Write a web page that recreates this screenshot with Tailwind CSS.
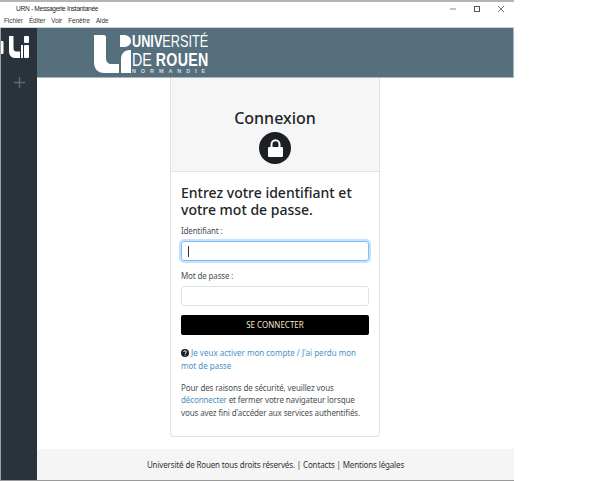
<!DOCTYPE html>
<html lang="fr">
<head>
<meta charset="utf-8">
<script src="https://cdn.jsdelivr.net/npm/@tailwindcss/browser@4"></script>
</head>
<body class="bg-white font-['Noto_Sans',sans-serif]">
<div class="w-[600px] h-[481px] overflow-hidden bg-white">
  <div class="w-[514px] h-[481px] flex flex-col border-t-2 border-b border-t-[#b4b4b4] border-b-[#9a9a9a] relative">
    <!-- title bar -->
    <div class="h-[14px] shrink-0 flex items-center pl-[16px] text-[6.600px] tracking-[-0.3px] leading-none text-[#222] font-['Liberation_Sans',sans-serif]">
      <span>URN - Messagerie Instantanée</span>
      <div class="ml-auto flex items-center">
        <svg class="w-[6px] h-[6px] mr-[18px]" viewBox="0 0 6 6"><path d="M0 3h6" stroke="#888" stroke-width="1"/></svg>
        <svg class="w-[6px] h-[6px] mr-[18px]" viewBox="0 0 6 6"><rect x=".5" y=".5" width="5" height="5" fill="none" stroke="#555" stroke-width="1"/></svg>
        <svg class="w-[6px] h-[6px] mr-[10px]" viewBox="0 0 6 6"><path d="M0 0l6 6M6 0L0 6" stroke="#777" stroke-width="1"/></svg>
      </div>
    </div>
    <!-- menu -->
    <div class="h-[12px] shrink-0 flex items-center gap-[6px] pl-[4px] text-[6.300px] leading-none text-[#333] font-['Liberation_Sans',sans-serif] border-b border-[#c8ced2]">
      <span>Fichier</span><span>Éditer</span><span>Voir</span><span>Fenêtre</span><span>Aide</span>
    </div>
    <div class="flex-1 min-h-0 flex">
      <!-- sidebar -->
      <aside class="w-[37px] shrink-0 bg-[#2a323c] border-l border-[#9aa0a6] flex flex-col pt-[8px] overflow-hidden">
        <svg class="w-[30px] h-[22px] shrink-0 -ml-px" viewBox="0 0 30 22" fill="#fff">
          <rect x="0" y="5" width="3.500" height="13" rx="1"/>
          <path d="M9 0h4.500v12c0 2.500 1 3.500 3 3.500H20V22h-5c-4 0-6-3-6-7z"/>
          <path d="M21 9h2v13h-2z"/>
          <rect x="24" y="0" width="5" height="7" rx="1"/>
          <rect x="24" y="9" width="5" height="13" rx="1"/>
        </svg>
        <svg class="w-[11px] h-[11px] shrink-0 mt-[19px] ml-[13px]" viewBox="0 0 11 11"><path d="M5.500 0v11M0 5.500h11" stroke="#5f6a74" stroke-width="1.300"/></svg>
      </aside>
      <div class="flex-1 min-w-0 flex flex-col">
        <!-- header -->
        <header class="h-[50px] shrink-0 bg-[#566f7d] border-r border-[#a9b5bc] border-b border-b-[#a9b5bc] flex items-start pl-[57px] pt-[7px]">
          <svg class="w-[37px] h-[38px] shrink-0" viewBox="0 0 37 38" fill="#fff">
            <path d="M0 0h10c1 0 2 1 2 2v21c0 4 2 6 6 6h7v9H10C4 38 0 34 0 27z"/>
            <path d="M26 0h4c4 0 7 2.500 7 6s-3 6-7 6h-4z"/>
            <path d="M37 15h-1c-6 0-9 4-9 9v14h10z"/>
          </svg>
          <div class="ml-px flex flex-col text-white font-['Liberation_Sans',sans-serif] w-[77px]">
            <div class="text-[16.500px] h-[12px] leading-[12px] whitespace-nowrap origin-left scale-x-[0.77]"><b>UNIV</b><span class="font-normal">ERSITÉ</span></div>
            <div class="text-[18px] h-[13px] leading-[13px] whitespace-nowrap mt-[7px] origin-left scale-x-[0.79]"><span class="font-normal">DE</span><b class="ml-[5px] tracking-[0.4px]">ROUEN</b></div>
            <div class="text-[5.500px] h-[5px] leading-[5px] whitespace-nowrap mt-[2px] tracking-[4.900px] font-bold text-[#d5dce0]">NORMANDIE</div>
          </div>
        </header>
        <!-- main -->
        <main class="flex-1 min-h-0 pl-[133px]">
          <div class="w-[210px] h-[359px] border border-t-0 border-[#e3e3e3] rounded-b-[4px] flex flex-col text-[#212529]">
            <div class="h-[94px] shrink-0 bg-[#f6f6f6] border-b border-[#e2e2e2] flex flex-col items-center pt-[30px]">
              <div class="text-[16px] leading-[20px] font-medium">Connexion</div>
              <div class="mt-[4px] w-[32px] h-[32px] rounded-full bg-[#1c1f23] flex items-center justify-center">
                <svg class="w-[15px] h-[18px]" viewBox="0 0 15 18"><path d="M3.500 9V5.500C3.500 3 5.200 1.200 7.500 1.200s4 1.800 4 4.300V9" fill="none" stroke="#fff" stroke-width="2"/><rect x="0" y="8" width="15" height="10" rx="1.200" fill="#fff"/></svg>
              </div>
            </div>
            <div class="flex-1 px-[10px] pt-[12px]">
              <h1 class="text-[14px] leading-[17px] font-medium text-[#212529]">Entrez votre identifiant et votre mot de passe.</h1>
              <label class="block text-[8px] tracking-[-0.15px] leading-[12px] text-[#4a4f54] mt-[7px]">Identifiant :</label>
              <div class="mt-[4px] h-[20px] rounded-[3px] border border-[#80bdff] shadow-[0_0_0_2px_rgba(0,123,255,0.22)] flex items-center pl-[6px]">
                <span class="w-px h-[11px] bg-[#333]"></span>
              </div>
              <label class="block text-[8px] tracking-[-0.15px] leading-[12px] text-[#4a4f54] mt-[9px]">Mot de passe :</label>
              <div class="mt-[4px] h-[20px] rounded-[3px] border border-[#dfe2e5]"></div>
              <button class="mt-[9px] w-full h-[20px] rounded-[2px] bg-black text-[#f4e4c8] text-[8px] leading-none flex items-center justify-center">SE CONNECTER</button>
              <div class="mt-[12px] text-[8px] leading-[12.500px]">
                <svg class="inline-block w-[8px] h-[8px] align-[-1px]" viewBox="0 0 8 8"><circle cx="4" cy="4" r="4" fill="#1c1f23"/><path d="M2.700 3c0-1.700 2.700-1.700 2.700 0 0 1-1.300 1-1.300 2" fill="none" stroke="#fff" stroke-width=".9"/><circle cx="4.100" cy="6.200" r=".55" fill="#fff"/></svg>
                <a class="text-[#4a92c4]">Je veux activer mon compte / J'ai perdu mon mot de passe</a>
              </div>
              <p class="mt-[9.500px] text-[8px] tracking-[-0.12px] leading-[12.500px] text-[#4a4f54]">Pour des raisons de sécurité, veuillez vous <a class="text-[#4a92c4]">déconnecter</a> et fermer votre navigateur lorsque vous avez fini d'accéder aux services authentifiés.</p>
            </div>
          </div>
        </main>
        <!-- footer -->
        <footer class="h-[31px] shrink-0 bg-[#f5f5f5] flex items-center justify-center text-[8px] tracking-[-0.15px] text-[#333] leading-none whitespace-nowrap">Université de Rouen tous droits réservés. | Contacts | Mentions légales</footer>
      </div>
    </div>
  </div>
</div>
</body>
</html>
